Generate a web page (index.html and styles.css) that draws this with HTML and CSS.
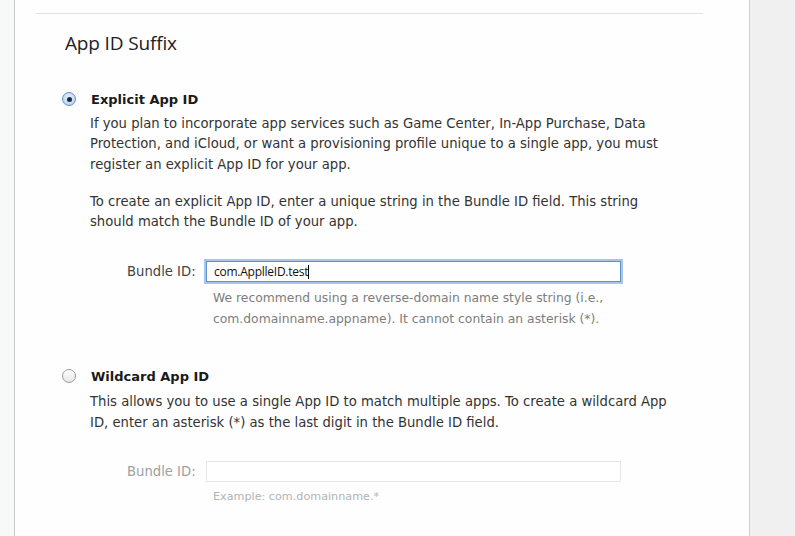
FILE: index.html
```html
<!DOCTYPE html>
<html>
<head>
<meta charset="utf-8">
<link rel="stylesheet" href="styles.css">
</head>
<body>
<div class="page">
  <div class="leftbar"></div>
  <main class="panel">
    <div class="rule"></div>
    <h2 class="title">App ID Suffix</h2>

    <section class="option">
      <div class="opt-head">
        <span class="radio checked"><span class="dot"></span></span>
        <span class="opt-title">Explicit App ID</span>
      </div>
      <p class="desc">If you plan to incorporate app services such as Game Center, In-App Purchase, Data Protection, and iCloud, or want a provisioning profile unique to a single app, you must register an explicit App ID for your app.</p>
      <p class="desc">To create an explicit App ID, enter a unique string in the Bundle ID field. This string should match the Bundle ID of your app.</p>
      <div class="field">
        <label class="flabel">Bundle ID:</label>
        <div class="input focused"><span class="val">com.ApplleID.test</span><span class="caret"></span></div>
      </div>
      <p class="help">We recommend using a reverse-domain name style string (i.e., com.domainname.appname). It cannot contain an asterisk (*).</p>
    </section>

    <section class="option second">
      <div class="opt-head">
        <span class="radio"></span>
        <span class="opt-title">Wildcard App ID</span>
      </div>
      <p class="desc first">This allows you to use a single App ID to match multiple apps. To create a wildcard App ID, enter an asterisk (*) as the last digit in the Bundle ID field.</p>
      <div class="field disabled">
        <label class="flabel">Bundle ID:</label>
        <div class="input"></div>
      </div>
      <p class="help light">Example: com.domainname.*</p>
    </section>
  </main>
  <div class="rightbar"></div>
</div>
</body>
</html>
```

FILE: styles.css
```css
html, body {
  margin: 0;
  padding: 0;
  height: 100%;
  overflow: hidden;
}
body {
  font-family: "DejaVu Sans", "Noto Sans", sans-serif;
  color: #333;
  background: #f0f0f0;
}
.page {
  display: flex;
  height: 536px;
}
.leftbar {
  width: 14px;
  flex: none;
  background: #f7f9f8;
  border-right: 1px solid #c9cccb;
}
.panel {
  width: 735px;
  flex: none;
  background: #fefefe;
  border-right: 1px solid #cfcfcf;
  box-shadow: 1px 0 0 #e2e2e2;
  padding: 0 0 0 21px;
  box-sizing: border-box;
}
.rightbar {
  flex: 1;
  background: #f0f0f0;
}
.rule {
  margin-top: 13px;
  width: 667px;
  height: 1px;
  background: #e1e1e1;
}
.title {
  margin: 17px 0 0 29px;
  font-family: "Open Sans", "Liberation Sans", sans-serif;
  font-weight: 400;
  font-size: 19px;
  letter-spacing: -0.15px;
  line-height: 24px;
  color: #222;
}
.option {
  margin-top: 34px;
  padding-left: 26px;
}
.option.second {
  margin-top: 37px;
}
.opt-head {
  display: flex;
  align-items: center;
  height: 20px;
}
.radio {
  width: 12px;
  height: 12px;
  border-radius: 50%;
  border: 1px solid #9a9a9a;
  background: linear-gradient(#ffffff, #e6e6e6);
  box-sizing: content-box;
  display: flex;
  align-items: center;
  justify-content: center;
  flex: none;
}
.radio.checked {
  border-color: #6a8fc0;
  background: radial-gradient(circle at 50% 40%, #eaf3fd, #a9c9ee);
}
.radio .dot {
  width: 5px;
  height: 5px;
  border-radius: 50%;
  background: #1c2a3c;
}
.opt-title {
  margin-left: 15px;
  font-weight: bold;
  font-size: 13px;
  color: #1a1a1a;
}
.desc {
  margin: 5px 0 0 28px;
  width: 592px;
  font-size: 13.2px;
  line-height: 20.3px;
  color: #333;
}
.desc + .desc {
  margin-top: 17px;
}
.desc.first {
  margin-top: 6px;
}
.field {
  display: flex;
  align-items: center;
  margin: 29px 0 0 65px;
}
.flabel {
  font-size: 13.2px;
  color: #444;
  width: 79px;
  flex: none;
}
.input {
  width: 415px;
  height: 21px;
  border: 1px solid #d5d5d5;
  background: #fff;
  box-sizing: border-box;
  display: flex;
  align-items: center;
  padding-left: 7px;
}
.input.focused {
  border: 1px solid #5f8fcc;
  box-shadow: 0 0 0 2px #a8c6ea;
}
.val {
  font-family: "Open Sans", "Liberation Sans", sans-serif;
  font-size: 12px;
  letter-spacing: -0.25px;
  color: #111;
}
.caret {
  width: 1px;
  height: 14px;
  background: #000;
}
.help {
  margin: 6px 0 0 151px;
  font-size: 12.35px;
  line-height: 20.5px;
  color: #7d7d7d;
  width: 430px;
}
.disabled {
  margin-top: 28px;
}
.disabled .flabel {
  color: #a0a0a0;
}
.disabled .input {
  border-color: #e6e6e6;
}
.help.light {
  font-size: 11.2px;
  color: #b3b3b3;
  margin-top: 5px;
}
```
